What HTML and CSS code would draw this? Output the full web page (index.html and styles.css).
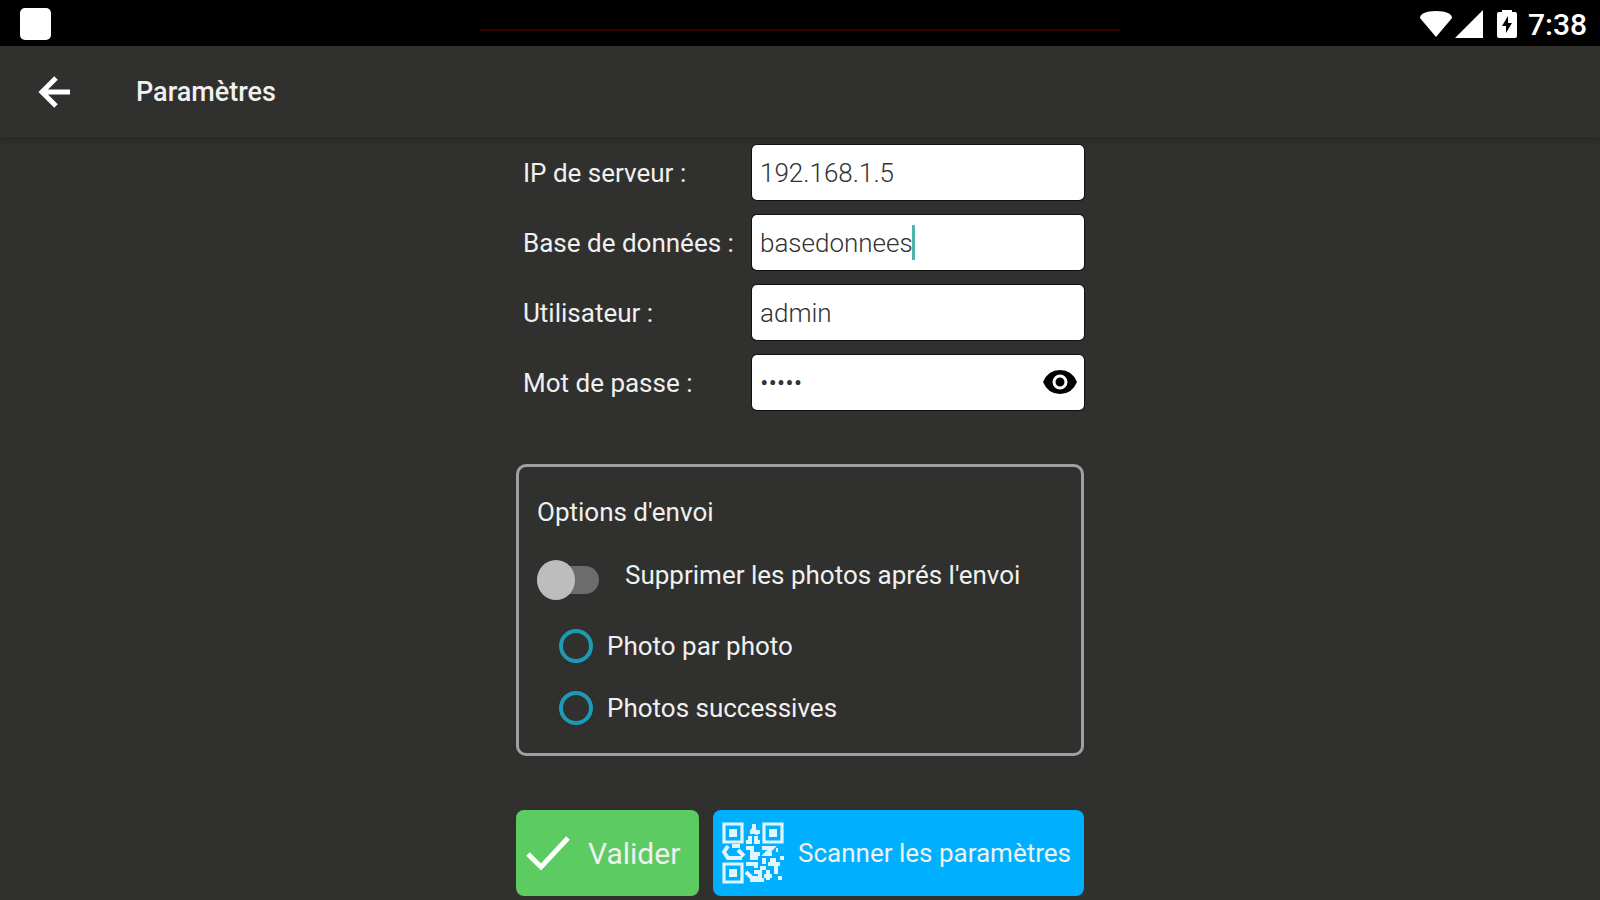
FILE: index.html
```html
<!DOCTYPE html>
<html lang="fr">
<head>
  <meta charset="UTF-8">
  <meta name="viewport" content="width=device-width, initial-scale=1.0">
  <title>Paramètres</title>
  <link rel="stylesheet" href="styles.css">
</head>
<body>
  <div class="status-bar">
    <span class="notification"></span>
    <span class="progress-line"></span>
    <div class="status-icons">
      <svg width="34" height="28" viewBox="0 0 34 28"><path d="M1 8Q1 5 5 3Q9 1 17 1T29 3Q33 5 33 8L17 27Z" fill="#fff"/></svg>
      <svg width="28" height="28" viewBox="0 0 28 28"><path d="M28 0V28H0Z" fill="#fff"/></svg>
      <svg class="battery" width="20" height="28" viewBox="0 0 20 28"><path d="M5 0H15V2H18Q20 2 20 4V26Q20 28 18 28H2Q0 28 0 26V4Q0 2 2 2H5Z" fill="#fff"/><path d="M11 6L5 16H9V23L15 13H11Z" fill="#000"/></svg>
      <span class="clock">7:38</span>
    </div>
  </div>

  <header class="app-bar">
    <button type="button" class="back" aria-label="Retour">
      <svg width="34" height="34" viewBox="0 0 34 34"><path d="M32 17H4M18 3L4 17L18 31" fill="none" stroke="#fff" stroke-width="5"/></svg>
    </button>
    <h1>Paramètres</h1>
  </header>

  <form class="settings">
    <div class="fields">
      <label for="server">IP de serveur :</label>
      <div class="field"><input type="text" id="server" value="192.168.1.5"></div>
      <label for="database">Base de données :</label>
      <div class="field"><input type="text" id="database" value="basedonnees"><span class="caret"></span></div>
      <label for="user">Utilisateur :</label>
      <div class="field"><input type="text" id="user" value="admin"></div>
      <label for="password">Mot de passe :</label>
      <div class="field">
        <input type="password" id="password" value="admin">
        <button type="button" class="show-password" aria-label="Afficher le mot de passe">
          <svg width="34" height="26" viewBox="0 0 34 26"><path d="M0 13Q5 1 17 1T34 13Q29 25 17 25T0 13Z" fill="#000"/><circle cx="17" cy="13" r="6" fill="none" stroke="#fff" stroke-width="3"/></svg>
        </button>
      </div>
    </div>

    <fieldset class="options">
      <h2>Options d'envoi</h2>
      <div class="switch-row">
        <input type="checkbox" class="switch" id="delete-photos">
        <label for="delete-photos">Supprimer les photos aprés l'envoi</label>
      </div>
      <div class="radio-row">
        <input type="radio" name="mode" id="one-by-one">
        <label for="one-by-one">Photo par photo</label>
      </div>
      <div class="radio-row">
        <input type="radio" name="mode" id="successive">
        <label for="successive">Photos successives</label>
      </div>
    </fieldset>

    <div class="actions">
      <button type="submit" class="btn btn-submit">
        <svg width="44" height="36" viewBox="0 0 44 36"><path d="M2 19L15 32L42 3" fill="none" stroke="#fff" stroke-width="5"/></svg>
        Valider
      </button>
      <button type="button" class="btn btn-scan">
        <svg width="62" height="62" viewBox="0 0 31 31" fill="none" stroke="#e0f6ff">
          <path d="M1 1H10V10H1ZM21 1H30V10H21ZM1 21H10V30H1Z" stroke-width="1.6"/>
          <path d="M4 4H7V7H4ZM24 4H27V7H24ZM4 24H7V27H4Z" fill="#e0f6ff"/>
          <path d="M16 1V4M15 3L18 6M14 5H19M13 8H15M17 7V9M12 10H15M16 10H19" stroke-width="2"/>
          <path d="M3 12L1 15L3 18H5M5 12H9M8 14L11 17M5 18H10M12 13H15V16H19M14 18H18M20 13H25L22 16H25M27 14H28M24 19H27M29 18H31" stroke-width="2"/>
          <path d="M21 18V21M23 21H29M12 21H16M17 20V23M19 23H22M27 22V26M12 25L15 28H18M16 25H19V28M14 29H21M21 27H25M23 24V29M28 28H30" stroke-width="2"/>
        </svg>
        Scanner les paramètres
      </button>
    </div>
  </form>
</body>
</html>
```
FILE: styles.css
```css
* {
  box-sizing: border-box;
}

body {
  margin: 0;
  min-height: 100vh;
  background-color: #30302e;
  color: #f0f0f0;
  font-family: Roboto, sans-serif;
  font-size: 26px;
}

svg {
  display: block;
  flex: none;
}

button {
  border: 0;
  padding: 0;
  background: none;
  font: inherit;
  color: inherit;
  cursor: pointer;
}

.status-bar {
  display: flex;
  align-items: center;
  justify-content: space-between;
  height: 46px;
  padding: 2px 13px 0 20px;
  background-color: #000;
}

.notification {
  width: 31px;
  height: 32px;
  border-radius: 5px;
  background-color: #fff;
}

.progress-line {
  position: absolute;
  top: 29px;
  left: 30%;
  width: 40%;
  height: 2px;
  background-color: #380000;
}

.status-icons {
  display: flex;
  align-items: center;
  gap: 2px;
}

.battery {
  margin: 0 9px 0 12px;
}

.clock {
  font-size: 30px;
  font-weight: 500;
  color: #fff;
}

.app-bar {
  display: flex;
  align-items: center;
  gap: 64px;
  height: 91px;
  padding-left: 38px;
  box-shadow: 0 4px 4px #292927;
}

h1,
h2 {
  margin: 0;
  font-size: 27px;
  font-weight: 500;
}

h2 {
  font-size: 26px;
  font-weight: 400;
  line-height: 32px;
}

.settings {
  width: 568px;
  margin: 8px auto 0;
}

.fields {
  display: grid;
  grid-template-columns: 1fr 332px;
  gap: 15px 0;
  align-items: center;
  padding-left: 7px;
}

.field {
  position: relative;
}

.field input {
  display: block;
  width: 100%;
  height: 55px;
  padding: 0 8px;
  border: 0;
  border-radius: 5px;
  background-color: #fff;
  box-shadow: 0 0 0 1px #111;
  color: #333;
  font-family: inherit;
  font-size: 26px;
  font-weight: 300;
}

.caret {
  position: absolute;
  top: 10px;
  left: 160px;
  width: 3px;
  height: 35px;
  background-color: #4db6ac;
}

.show-password {
  position: absolute;
  top: 14px;
  right: 7px;
}

.options {
  margin: 54px 0;
  padding: 29px 18px 28px;
  border: 3px solid #a0a0a0;
  border-radius: 10px;
}

.switch-row,
.radio-row {
  display: flex;
  align-items: center;
}

.switch-row {
  gap: 26px;
  margin: 32px 0 29px;
}

.switch-row label {
  padding-bottom: 10px;
}

.radio-row {
  gap: 14px;
  height: 34px;
  margin: 0 0 28px 22px;
}

.radio-row:last-child {
  margin-bottom: 0;
}

.options input {
  appearance: none;
  flex: none;
  margin: 0;
}

.switch {
  display: flex;
  align-items: center;
  width: 62px;
  height: 28px;
  border-radius: 14px;
  background-color: #6c6c6c;
}

.switch::before {
  content: "";
  width: 38px;
  height: 40px;
  border-radius: 50%;
  background-color: #bdbdbd;
}

.switch:checked::before {
  margin-left: auto;
}

.radio-row input {
  width: 34px;
  height: 34px;
  border: 4px solid #1c9bb5;
  border-radius: 50%;
}

.radio-row input:checked {
  background: radial-gradient(#1c9bb5 50%, transparent 55%);
}

.actions {
  display: flex;
  gap: 14px;
}

.btn {
  display: flex;
  align-items: center;
  height: 86px;
  border-radius: 8px;
  white-space: nowrap;
}

.btn-submit {
  width: 183px;
  gap: 18px;
  padding-left: 10px;
  background-color: #5ccb62;
  font-size: 30px;
}

.btn-scan {
  flex: 1;
  gap: 14px;
  padding-left: 9px;
  background-color: #00b0ff;
}
```
